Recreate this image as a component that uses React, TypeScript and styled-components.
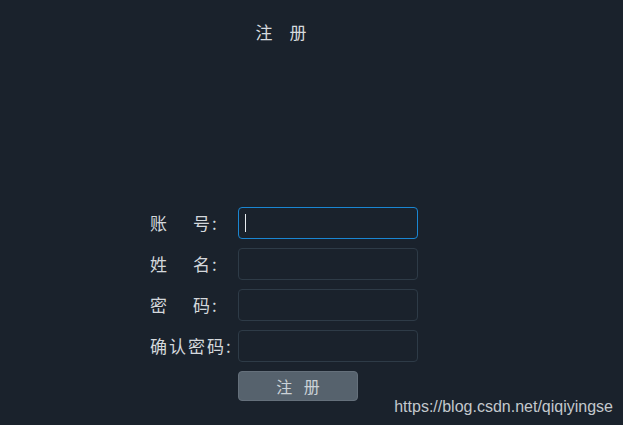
import React from "react";
import styled, { createGlobalStyle } from "styled-components";

const Global = createGlobalStyle`
  html, body { margin: 0; padding: 0; background: #1a222c; }
  body { font-family: "Noto Sans CJK SC", "Noto Sans", sans-serif; }
`;

const Page = styled.div`
  position: relative;
  width: 623px;
  height: 425px;
  background: #1a222c;
  overflow: hidden;
  padding-left: 150px;
  box-sizing: border-box;
`;

const Column = styled.div`
  width: 268px;
  display: flex;
  flex-direction: column;
`;

const Title = styled.h1`
  margin: 20px 6px 0 0;
  height: 24px;
  line-height: 24px;
  text-align: center;
  font-size: 17px;
  font-weight: normal;
  color: #d6dade;
  letter-spacing: 0;
  white-space: pre;
`;

const Form = styled.form`
  margin-top: 163px;
  display: flex;
  flex-direction: column;
  gap: 9px;
`;

const Row = styled.div`
  display: flex;
  align-items: center;
  height: 32px;
`;

const Label = styled.label`
  width: 88px;
  display: flex;
  align-items: center;
  font-size: 17px;
  color: #d4d8dc;
  line-height: 20px;
`;

const Chars = styled.span<{ $w: number }>`
  width: ${(p) => p.$w}px;
  display: flex;
  justify-content: space-between;
`;

const Colon = styled.span`
  margin-left: 2px;
`;

const Input = styled.div<{ $focus?: boolean }>`
  width: 180px;
  height: 32px;
  box-sizing: border-box;
  border-radius: 4px;
  border: 1px solid ${(p) => (p.$focus ? "#1a86d2" : "#2e3b47")};
  background: #1a222c;
  display: flex;
  align-items: center;
  padding-left: 6px;
`;

const Caret = styled.span`
  width: 1px;
  height: 18px;
  background: #e8ecef;
`;

const ButtonRow = styled.div`
  display: flex;
  padding-left: 88px;
`;

const Button = styled.button`
  width: 120px;
  height: 30px;
  box-sizing: border-box;
  border-radius: 4px;
  border: 1px solid #65707b;
  background: #56626d;
  color: #ccd2d7;
  font-family: "Noto Sans CJK SC", "Noto Sans", sans-serif;
  font-size: 16px;
  letter-spacing: 4px;
  padding: 0 0 0 4px;
  line-height: 28px;
`;

const Watermark = styled.div`
  position: absolute;
  right: 10px;
  bottom: 9px;
  font-family: "Liberation Sans", Arial, sans-serif;
  font-size: 16px;
  color: #c3c8cd;
  line-height: 18px;
`;

const rows = [
  { chars: ["账", "号"], w: 60, focus: true },
  { chars: ["姓", "名"], w: 60 },
  { chars: ["密", "码"], w: 60 },
  { chars: ["确", "认", "密", "码"], w: 74 },
];

export default function App() {
  return (
    <>
      <Global />
      <Page>
        <Column>
          <Title>{"注　册"}</Title>
          <Form onSubmit={(e) => e.preventDefault()}>
            {rows.map((r, i) => (
              <Row key={i}>
                <Label>
                  <Chars $w={r.w}>
                    {r.chars.map((c, j) => (
                      <span key={j}>{c}</span>
                    ))}
                  </Chars>
                  <Colon>:</Colon>
                </Label>
                <Input $focus={r.focus}>{r.focus && <Caret />}</Input>
              </Row>
            ))}
            <ButtonRow>
              <Button type="submit">注 册</Button>
            </ButtonRow>
          </Form>
        </Column>
        <Watermark>https://blog.csdn.net/qiqiyingse</Watermark>
      </Page>
    </>
  );
}
